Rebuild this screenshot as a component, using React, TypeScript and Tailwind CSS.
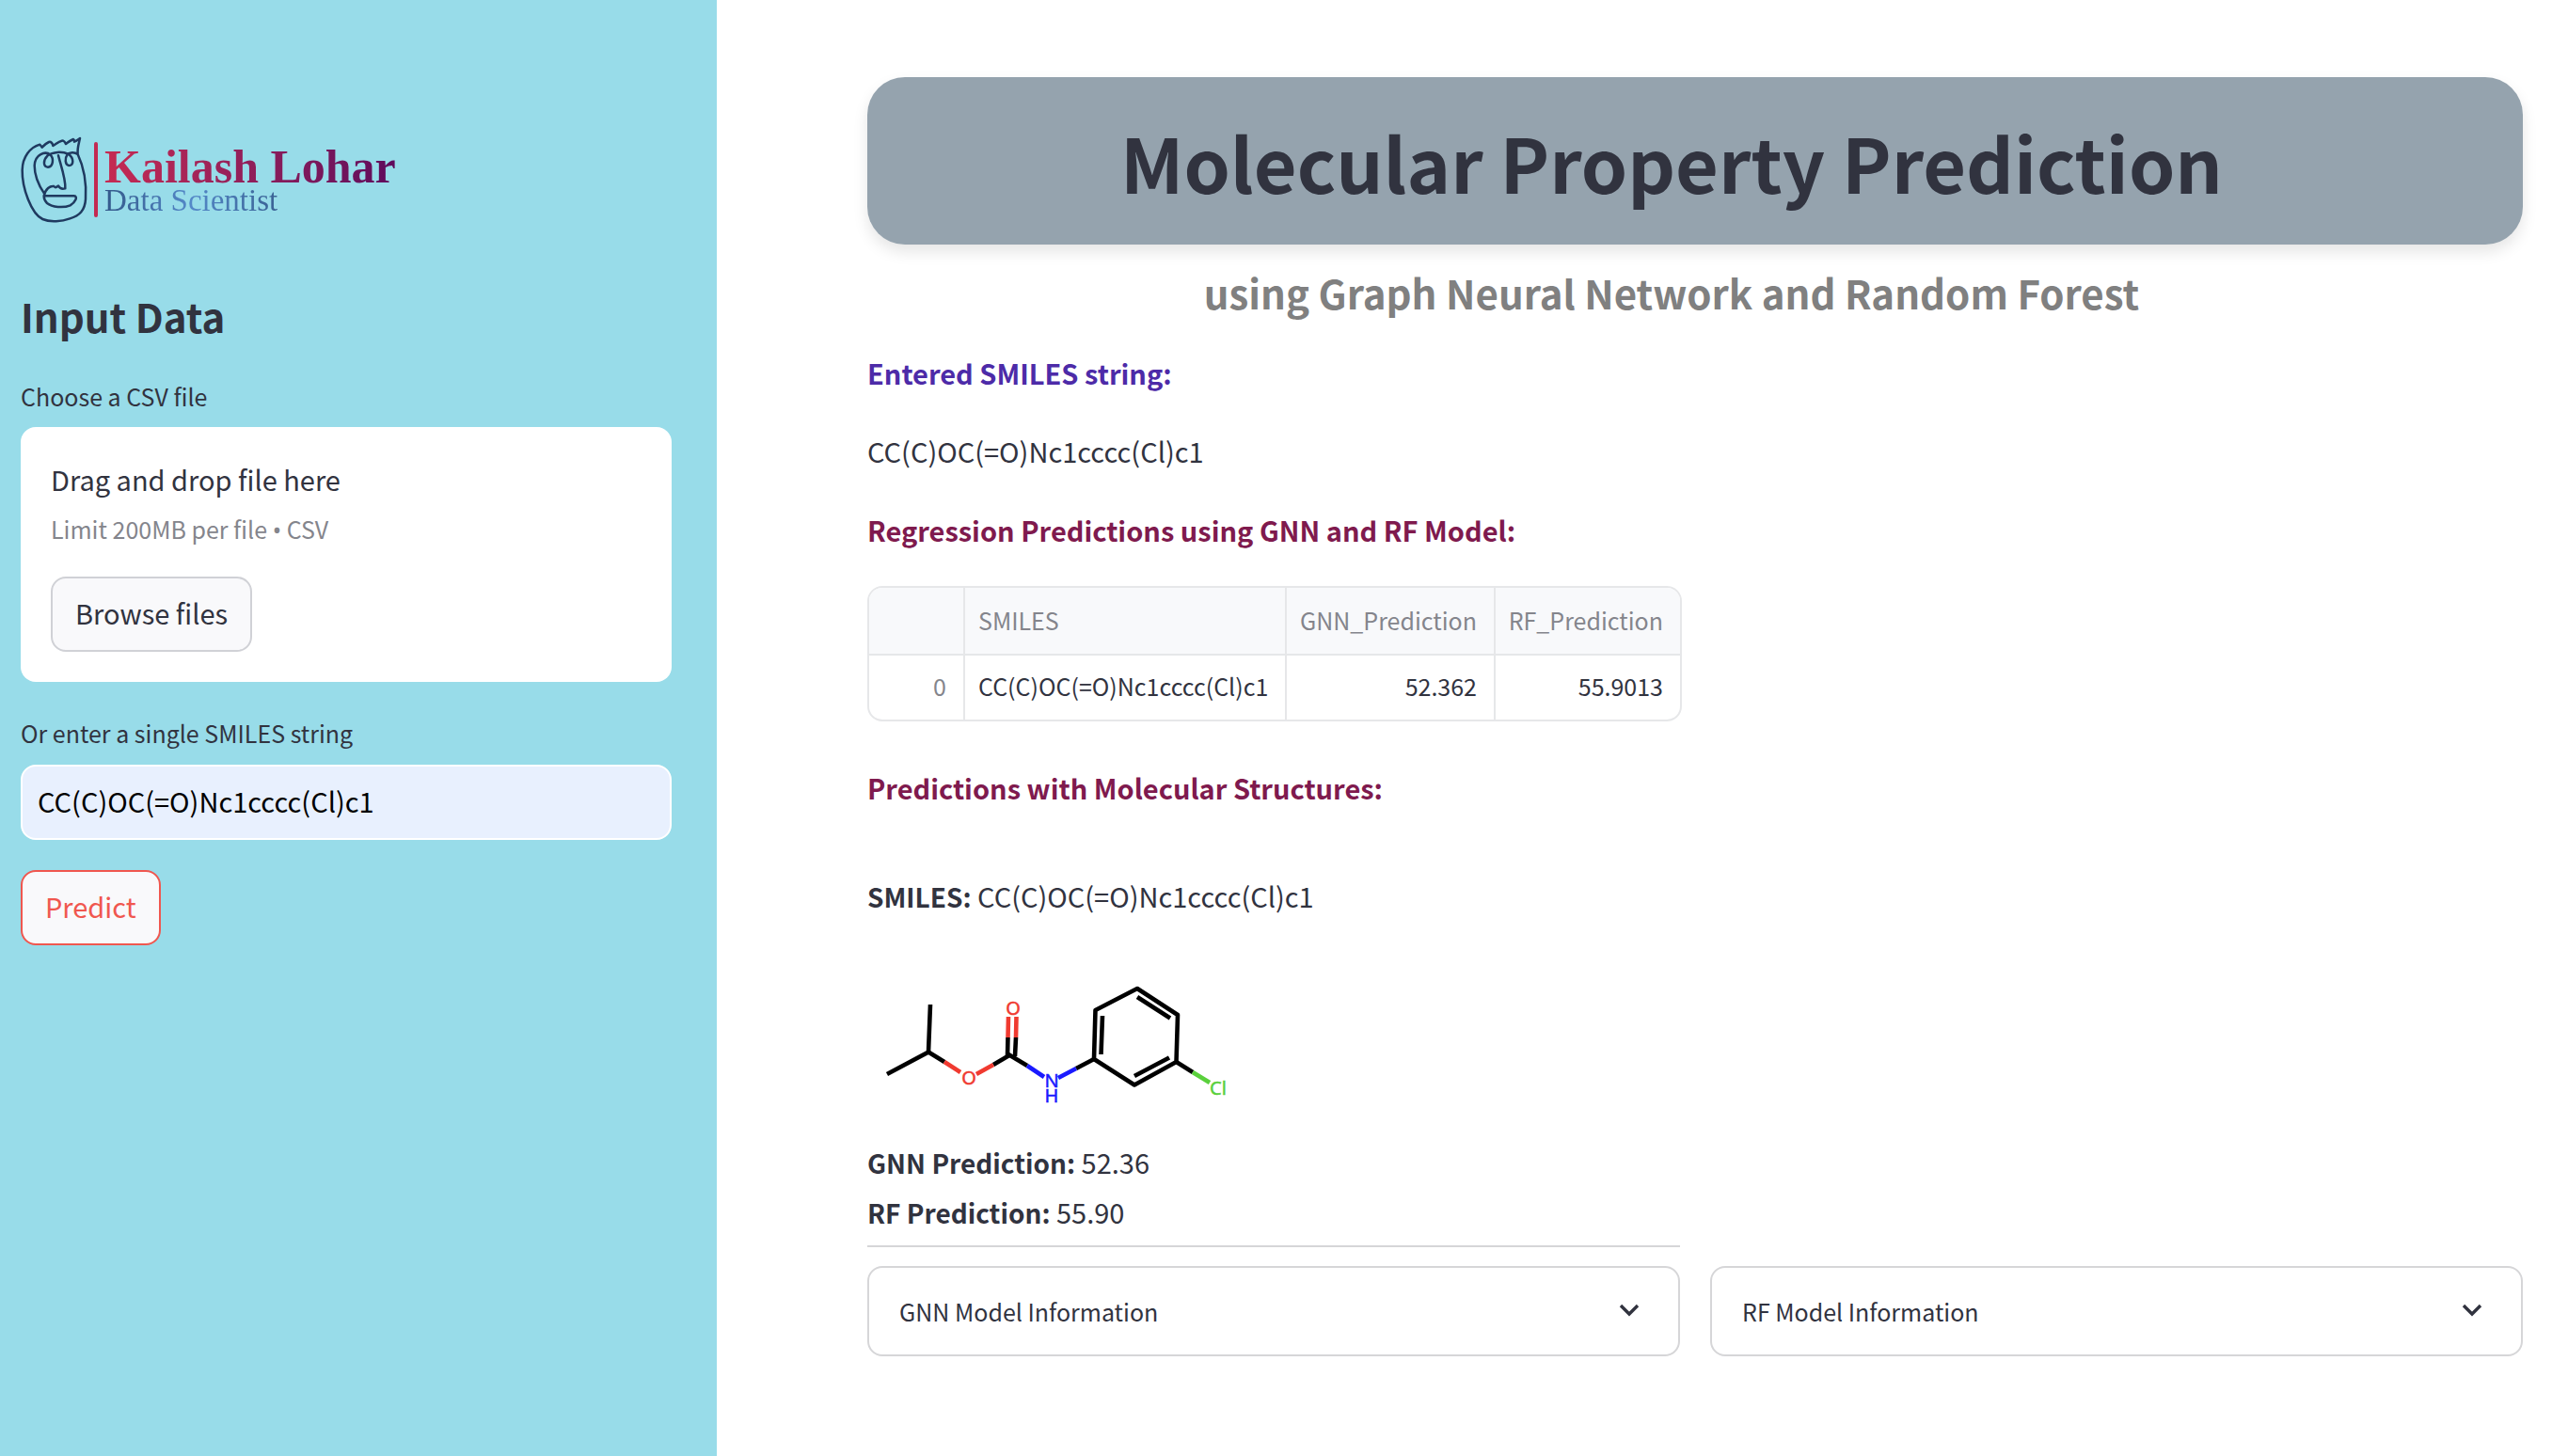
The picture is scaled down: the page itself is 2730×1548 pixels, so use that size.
import { useState } from "react";

const SMILES = "CC(C)OC(=O)Nc1cccc(Cl)c1";

function Logo() {
  return (
    <div className="flex h-[94px] items-center">
      <svg viewBox="18 12 216 282" className="h-[94px] w-[72px] shrink-0" fill="none" stroke="#1f3a60" strokeWidth="7.5" strokeLinecap="round" strokeLinejoin="round" aria-hidden="true">
        <path d="M200 72 C198 52 203 40 207 21 C200 26 195 30 189 32 C189 28 188 25 186 24 C178 27 170 33 162 39 C160 33 154 28 149 29 C138 31 130 40 121 45 C120 37 114 31 108 33 C99 37 92 43 86 50 C84 46 82 43 79 41 C48 50 24 80 23 122 C22 180 52 262 88 279 C112 290 150 286 175 277 C205 268 223 252 225 215 C228 165 218 110 200 72 C190 64 174 65 167 73 C158 85 159 106 172 108 C188 108 188 84 171 72 C150 62 120 64 104 76 C90 90 88 112 105 113 C122 112 124 86 113 74 C96 60 64 72 62 108 C62 142 76 172 93 197" />
        <path d="M138 76 C146 108 162 150 160 181 C150 184 142 180 138 173 C132 176 128 181 124 174 C112 172 97 182 92 205 L188 205 C202 206 192 226 176 235 C154 244 118 241 102 228 C94 220 92 214 92 205" />
      </svg>
      <div className="ml-[6px] h-[80px] w-[4px] shrink-0 rounded-full bg-[#c32a52]" />
      <div className="ml-[7px] font-['Liberation_Serif',serif]">
        <div className="bg-linear-to-r from-[#c62a52] to-[#5f0a5c] bg-clip-text pt-1 text-[50px] leading-[40px] font-bold text-transparent">Kailash Lohar</div>
        <div className="w-fit bg-linear-to-r from-[#34598a] via-[#5488c8] to-[#3a6294] bg-clip-text text-[33px] leading-[32px] text-transparent">Data Scientist</div>
      </div>
    </div>
  );
}

function Sidebar() {
  const [smiles, setSmiles] = useState(SMILES);
  return (
    <aside className="w-[762px] shrink-0 bg-[#98dce9] pt-[144px] pr-12 pl-[22px]">
      <Logo />
      <h2 className="mt-[69px] text-[42px] leading-[58px] font-bold">Input Data</h2>
      <div className="mt-9 text-[25px] leading-[40px]" id="file-label">Choose a CSV file</div>
      <section aria-labelledby="file-label" className="mt-[13px] rounded-2xl bg-white px-8 pt-[31px] pb-8">
        <div className="text-[29px] leading-[48px]">Drag and drop file here</div>
        <div className="mt-[9px] text-[25px] leading-[40px] text-[#84858c]">
          Limit 200MB per file <span className="font-['Noto_Sans',sans-serif]">•</span> CSV
        </div>
        <button className="mt-[30px] block h-20 rounded-2xl border-2 border-[#d0d1d6] bg-[#f9f9fb] px-6 pb-1 text-[29px] leading-[48px]">Browse files</button>
      </section>
      <label htmlFor="smiles" className="mt-[34px] block text-[25px] leading-[40px]">Or enter a single SMILES string</label>
      <input
        id="smiles"
        value={smiles}
        onChange={(e) => setSmiles(e.target.value)}
        className="mt-[14px] block h-20 w-full rounded-2xl border-2 border-white bg-[#e8f0fe] px-4 pb-1 text-[29px] text-black outline-none"
      />
      <button className="mt-8 h-20 rounded-2xl border-2 border-[#f0574f] bg-[#f9f9fb] px-6 pb-1 text-[29px] leading-[48px] text-[#f0574f]">Predict</button>
    </aside>
  );
}

function ResultTable() {
  return (
    <div className="mt-9 w-fit overflow-hidden rounded-2xl border-2 border-[#e6e7e9]">
      <table className="border-separate border-spacing-0 text-[25px] leading-[40px]">
        <thead className="bg-[#f8f9fb] text-[#84858c]">
          <tr className="h-[72px]">
            <th className="w-[102px] border-r-2 border-b-2 border-[#e6e7e9]" aria-label="Index" />
            <th className="w-[342px] border-r-2 border-b-2 border-[#e6e7e9] px-[14px] pb-[2px] text-left font-normal">SMILES</th>
            <th className="w-[222px] border-r-2 border-b-2 border-[#e6e7e9] pr-[18px] pb-[2px] pl-3 text-right font-normal">GNN_Prediction</th>
            <th className="w-[196px] border-b-2 border-[#e6e7e9] pr-[18px] pb-[2px] pl-3 text-right font-normal">RF_Prediction</th>
          </tr>
        </thead>
        <tbody>
          <tr className="h-[68px]">
            <td className="border-r-2 border-[#e6e7e9] px-[18px] pb-1 text-right text-[#84858c]">0</td>
            <td className="border-r-2 border-[#e6e7e9] px-[14px] pb-1">{SMILES}</td>
            <td className="border-r-2 border-[#e6e7e9] px-[18px] pb-1 text-right">52.362</td>
            <td className="px-[18px] pb-1 text-right">55.9013</td>
          </tr>
        </tbody>
      </table>
    </div>
  );
}

function Molecule() {
  return (
    <svg viewBox="920 1030 400 160" className="-ml-[2px] mt-[53px] block h-[160px] w-[400px]" role="img" aria-label="Molecular structure" fill="none" strokeWidth="4.600">
      <g stroke="#000">
        <path d="M989 1068 L987 1118.500 L943 1142" />
        <path d="M987 1118.500 L1004 1129" />
        <path d="M1056 1132 L1073 1122" />
        <path d="M1071 1123 L1071.500 1103 M1079 1123 L1080 1103" />
        <path d="M1072 1121 L1092 1133" />
        <path d="M1144 1136 L1163 1126" />
        <path d="M1163 1126 L1164.500 1074 L1209 1051 L1252 1079 L1250.500 1129 L1206 1153.500 Z" strokeLinejoin="round" />
        <path d="M1170.500 1121 L1172 1080 M1209 1060 L1244 1082.500 M1206 1144 L1243 1124.500" />
        <path d="M1250.500 1129 L1268 1140" />
      </g>
      <path stroke="#f03a30" d="M1004 1129 L1021 1140 M1038 1142 L1056 1132 M1071.500 1103 L1072 1081 M1080 1103 L1080.500 1081" />
      <path stroke="#1a1aff" d="M1092 1133 L1110 1145 M1125 1146 L1144 1136" />
      <path stroke="#5ad03c" d="M1268 1140 L1286 1151" />
      <g fontSize="20" strokeWidth="0.5" textAnchor="middle" className="font-['Noto_Sans',sans-serif]">
        <text x="1077" y="1079" fill="#f03a30" stroke="#f03a30">O</text>
        <text x="1030" y="1153" fill="#f03a30" stroke="#f03a30">O</text>
        <text x="1118" y="1156" fill="#1a1aff" stroke="#1a1aff">N</text>
        <text x="1118" y="1172" fill="#1a1aff" stroke="#1a1aff">H</text>
        <text x="1295" y="1164" fill="#5ad03c" stroke="#5ad03c">Cl</text>
      </g>
    </svg>
  );
}

function Expander({ title }: { title: string }) {
  return (
    <button className="flex h-24 items-center justify-between rounded-2xl border-2 border-[#d6d6d8] pr-10 pl-8 text-left text-[25px] leading-[40px]">
      {title}
      <svg viewBox="0 0 24 16" className="h-4 w-6" fill="none" stroke="currentColor" strokeWidth="3.4" aria-hidden="true">
        <path d="M3 2 L12 11 L21 2" />
      </svg>
    </button>
  );
}

export default function App() {
  return (
    <div className="flex min-h-screen bg-white font-['Noto_Sans_CJK_SC','Noto_Sans',sans-serif] text-[#31333f]">
      <Sidebar />
      <main className="min-w-0 flex-1 pt-[82px] pr-12 pb-[104px] pl-40">
        <header className="text-center">
          <h1 className="rounded-[40px] bg-[#95a3ae] pt-[37px] pr-[50px] pb-[35px] text-[79px] leading-[106px] font-bold shadow-[0_8px_16px_rgba(0,0,0,0.1)]">Molecular Property Prediction</h1>
          <h2 className="mt-[22px] pr-[50px] text-[42px] leading-[58px] font-bold text-[#808080]">using Graph Neural Network and Random Forest</h2>
        </header>
        <h3 className="mt-[32px] text-[29px] leading-[48px] font-bold text-[#4d2ba8]">Entered SMILES string:</h3>
        <p className="mt-[35px] text-[29px] leading-[48px]">{SMILES}</p>
        <h3 className="mt-[36px] text-[29px] leading-[48px] font-bold text-[#7f1a4e]">Regression Predictions using GNN and RF Model:</h3>
        <ResultTable />
        <h3 className="mt-[46px] text-[29px] leading-[48px] font-bold text-[#7f1a4e]">Predictions with Molecular Structures:</h3>
        <p className="mt-[67px] text-[29px] leading-[48px]"><strong className="text-[28px]">SMILES:</strong> {SMILES}</p>
        <Molecule />
        <div className="mt-[19px] text-[29px] leading-[52px]">
          <p><strong className="text-[28px]">GNN Prediction:</strong> 52.36</p>
          <p><strong className="text-[28px]">RF Prediction:</strong> 55.90</p>
        </div>
        <div className="mt-[9px] grid grid-cols-2 gap-x-8 gap-y-5">
          <hr className="border-t-2 border-[#d6d6d8]" />
          <span />
          <Expander title="GNN Model Information" />
          <Expander title="RF Model Information" />
        </div>
      </main>
    </div>
  );
}
